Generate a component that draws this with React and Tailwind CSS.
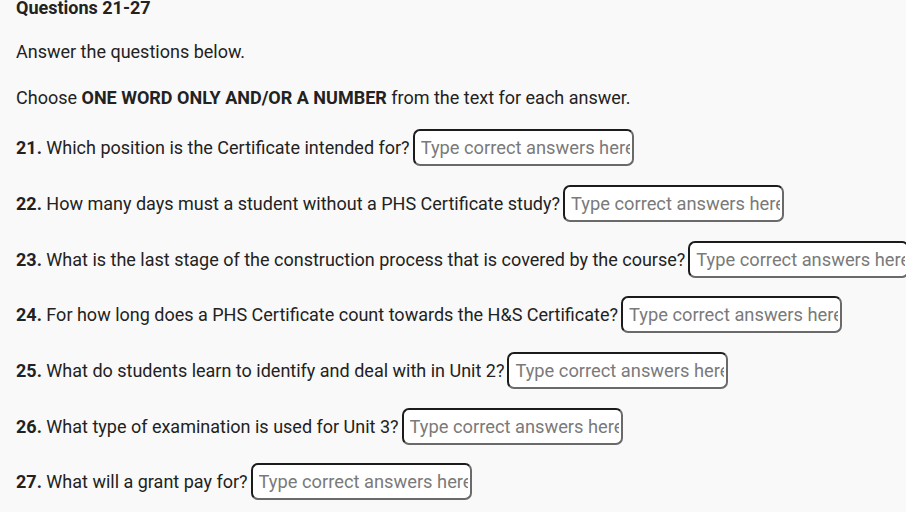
import React from "react";

const questions = [
  { num: 21, text: "Which position is the Certificate intended for?" },
  { num: 22, text: "How many days must a student without a PHS Certificate study?" },
  { num: 23, text: "What is the last stage of the construction process that is covered by the course?" },
  { num: 24, text: "For how long does a PHS Certificate count towards the H&S Certificate?" },
  { num: 25, text: "What do students learn to identify and deal with in Unit 2?" },
  { num: 26, text: "What type of examination is used for Unit 3?" },
  { num: 27, text: "What will a grant pay for?" },
];

const App = () => {
  return (
    <div className="min-h-screen w-full overflow-hidden bg-[#f9f9f9] text-[#222222] font-['Roboto',sans-serif] text-[18px]">
      <div className="-mt-[6px] pl-4">
        <h2 className="font-bold leading-[28px]">Questions 21-27</h2>
        <p className="mt-4 leading-[28px]">Answer the questions below.</p>
        <p className="mt-[18px] leading-[28px]">
          Choose <strong className="font-bold">ONE WORD ONLY AND/OR A NUMBER</strong> from the text for each answer.
        </p>

        <div className="mt-[8px]">
          {questions.map((q) => (
            <div key={q.num} className="flex h-[55.67px] items-center whitespace-nowrap">
              <span>
                <strong className="font-bold">{q.num}.</strong> {q.text}
              </span>
              <input
                type="text"
                placeholder="Type correct answers here"
                className="ml-[3px] h-[37px] w-[221px] shrink-0 rounded-[7px] border-2 border-t-[#1c1c1c] border-l-[#1c1c1c] border-r-[#6a6a6a] border-b-[#6a6a6a] bg-white pl-[6px] pr-[2px] text-[18.3px] text-[#222222] outline-none placeholder:text-[#7a7a7a]"
              />
            </div>
          ))}
        </div>
      </div>
    </div>
  );
};

export default App;
